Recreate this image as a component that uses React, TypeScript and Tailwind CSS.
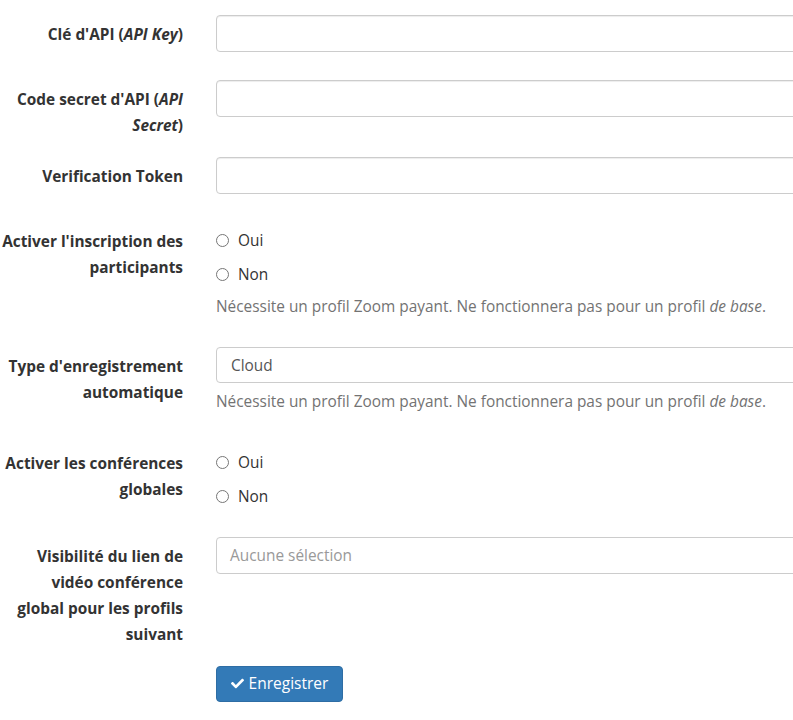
import { FaCheck } from "react-icons/fa";

const font = { fontFamily: '"Open Sans", "Liberation Sans", sans-serif' };

function Label({ children, className = "" }: { children: React.ReactNode; className?: string }) {
  return (
    <div className={`w-[183px] shrink-0 pt-[7px] text-right text-[15.4px] font-bold leading-[26.3px] text-[#333] ${className}`}>
      {children}
    </div>
  );
}

function TextInput() {
  return <div className="h-[37px] w-[700px] shrink-0 rounded-[4px] border border-[#ccc] bg-white shadow-[inset_0_1px_1px_rgba(0,0,0,0.075)]" />;
}

function Radio({ label }: { label: string }) {
  return (
    <div className="flex h-[26px] items-center gap-[9px] text-[15.4px] text-[#333]">
      <span className="h-[13px] w-[13px] rounded-full border border-[#767676] bg-white" />
      <span>{label}</span>
    </div>
  );
}

function Help() {
  return (
    <p className="whitespace-nowrap text-[15.4px] leading-[26px] text-[#737373]">
      Nécessite un profil Zoom payant. Ne fonctionnera pas pour un profil <em>de base</em>.
    </p>
  );
}

export default function App() {
  return (
    <div className="h-[720px] w-[793px] overflow-hidden bg-white" style={font}>
      <div className="flex flex-col pt-[15px]">
        <div className="flex gap-[33px]">
          <Label>
            Clé d'API (<em>API Key</em>)
          </Label>
          <TextInput />
        </div>

        <div className="mt-[28px] flex gap-[33px]">
          <Label>
            Code secret d'API (<em>API</em>
            <br />
            <em>Secret</em>)
          </Label>
          <TextInput />
        </div>

        <div className="mt-[17px] flex gap-[33px]">
          <Label className="pt-[6px]">Verification Token</Label>
          <TextInput />
        </div>

        <div className="mt-[28px] flex gap-[33px]">
          <Label>
            Activer l'inscription des
            <br />
            participants
          </Label>
          <div className="pt-[6px]">
            <Radio label="Oui" />
            <div className="mt-[8px]">
              <Radio label="Non" />
            </div>
            <div className="mt-[6px]">
              <Help />
            </div>
          </div>
        </div>

        <div className="mt-[27px] flex gap-[33px]">
          <Label>
            Type d'enregistrement
            <br />
            automatique
          </Label>
          <div>
            <div className="flex h-[36px] w-[700px] items-center rounded-[4px] border border-[#ccc] bg-white px-[14px] pt-[1px] text-[15.4px] text-[#555]">
              Cloud
            </div>
            <div className="mt-[6px]">
              <Help />
            </div>
          </div>
        </div>

        <div className="mt-[29px] flex gap-[33px]">
          <Label>
            Activer les conférences
            <br />
            globales
          </Label>
          <div className="pt-[6px]">
            <Radio label="Oui" />
            <div className="mt-[8px]">
              <Radio label="Non" />
            </div>
          </div>
        </div>

        <div className="mt-[27px] flex gap-[33px]">
          <Label className="pt-[7px]">
            Visibilité du lien de
            <br />
            vidéo conférence
            <br />
            global pour les profils
            <br />
            suivant
          </Label>
          <div>
            <div className="flex h-[37px] w-[700px] items-center rounded-[4px] border border-[#ccc] bg-white px-[13px] text-[15.4px] text-[#999]">
              Aucune sélection
            </div>
          </div>
        </div>

        <div className="mt-[17px] flex gap-[33px]">
          <div className="w-[183px] shrink-0" />
          <button className="flex h-[36px] w-[127px] items-center justify-center gap-[5px] rounded-[4px] border border-[#2e6da4] bg-[#337ab7] text-[15.5px] text-white">
            <FaCheck className="h-[13px] w-[13px]" />
            Enregistrer
          </button>
        </div>
      </div>
    </div>
  );
}
